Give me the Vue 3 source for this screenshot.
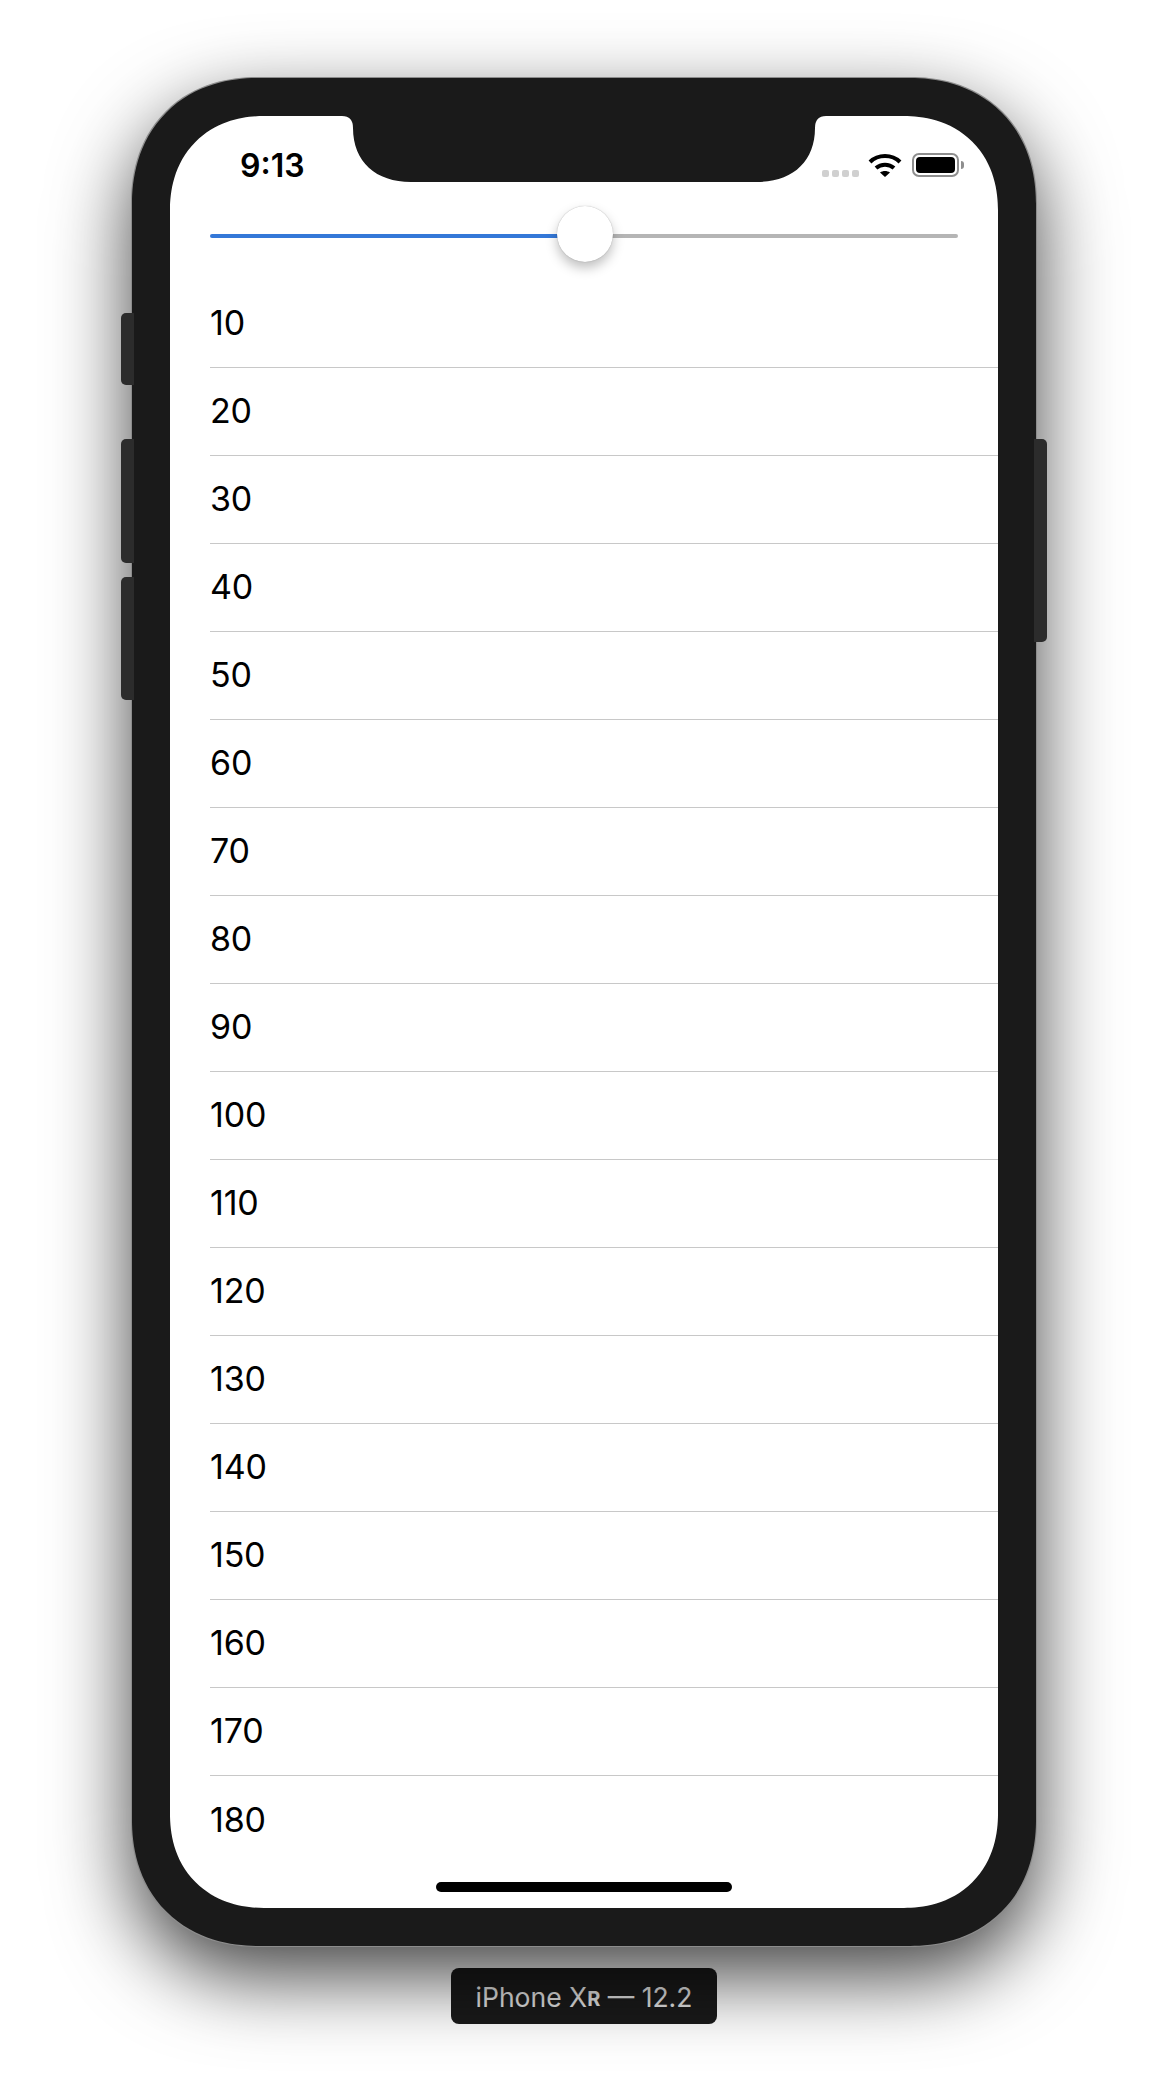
<template>
  <div class="stage">
    <div class="device">
      <span class="side-btn mute"></span>
      <span class="side-btn vol-up"></span>
      <span class="side-btn vol-down"></span>
      <span class="side-btn power"></span>

      <div class="screen">
        <svg class="notch" width="484" height="66" viewBox="0 0 484 66">
          <path d="M0 0 Q11 0 11 12 C11 46 34 66 69 66 H415 C450 66 473 46 473 12 Q473 0 484 0 Z" fill="#1a1a1a" />
        </svg>

        <div class="status-bar">
          <span class="time">9:13</span>
          <div class="status-icons">
            <div class="signal">
              <i v-for="n in 4" :key="n"></i>
            </div>
            <svg class="wifi" width="34" height="24" viewBox="0 0 34 24" fill="none" stroke="#000">
              <path d="M2 9 C10 1 24 1 32 9" stroke-width="4" />
              <path d="M8 15 C13 10.5 21 10.5 26 15" stroke-width="4" />
              <path d="M12 19.5 C15 17.5 19 17.5 22 19.5 L17 24 Z" fill="#000" stroke="none" />
            </svg>
            <div class="battery">
              <div class="battery-body"><div class="battery-level"></div></div>
              <span class="battery-cap"></span>
            </div>
          </div>
        </div>

        <div class="slider">
          <div class="track fill" :style="{ width: fillWidth + 'px' }"></div>
          <div class="thumb"></div>
          <div class="track rest"></div>
        </div>

        <ul class="list">
          <li v-for="item in items" :key="item" class="row">{{ item }}</li>
        </ul>

        <div class="home-indicator"></div>
      </div>
    </div>

    <div class="device-label">iPhone X<span class="small-r">R</span> — 12.2</div>
  </div>
</template>

<script setup>
const items = Array.from({ length: 18 }, (_, i) => (i + 1) * 10);
const fillWidth = 350;
</script>

<style>
html,
body {
  background: #fff;
}
</style>

<style scoped>
* {
  box-sizing: border-box;
}

.stage {
  width: 1168px;
  height: 2096px;
  padding-top: 78px;
  display: flex;
  flex-direction: column;
  align-items: center;
  overflow: hidden;
  background: #fff;
  font-family: Inter, "Liberation Sans", sans-serif;
}

.device {
  position: relative;
  width: 904px;
  height: 1868px;
  padding: 38px;
  flex: none;
  background: #1a1a1a;
  border-radius: 122px;
  box-shadow: 0 0 0 1px #8c8c8c, 0 30px 80px rgba(0, 0, 0, 0.75);
}

.side-btn {
  position: absolute;
  width: 13px;
  background: #2c2c2c;
  border-radius: 5px 0 0 5px;
}

.mute {
  left: -11px;
  top: 235px;
  height: 72px;
}

.vol-up {
  left: -11px;
  top: 361px;
  height: 124px;
}

.vol-down {
  left: -11px;
  top: 499px;
  height: 123px;
}

.power {
  right: -11px;
  top: 361px;
  height: 203px;
  border-radius: 0 5px 5px 0;
}

.screen {
  position: relative;
  width: 828px;
  height: 1792px;
  background: #fff;
  border-radius: 88px;
  overflow: hidden;
}

@supports (corner-shape: superellipse(1.3)) {
  .device {
    border-radius: 126px;
    corner-shape: superellipse(1.12);
  }

  .screen {
    border-radius: 94px;
    corner-shape: superellipse(1.12);
  }
}

.notch {
  position: absolute;
  left: 172px;
  top: 0;
}

.status-bar {
  height: 90px;
  padding: 32px 40px 0 70px;
  display: flex;
  justify-content: space-between;
}

.time {
  font-size: 32px;
  font-weight: 600;
  line-height: 36px;
  color: #000;
}

.status-icons {
  display: flex;
  align-items: flex-start;
  margin-top: 5px;
}

.signal {
  display: flex;
  gap: 3px;
  margin: 17px 9px 0 0;
}

.signal i {
  width: 7px;
  height: 7px;
  border-radius: 2px;
  background: #d0d0d0;
}

.wifi {
  margin-right: 10px;
}

.battery {
  display: flex;
  align-items: center;
  margin-right: -6px;
}

.battery-body {
  width: 47px;
  height: 24px;
  padding: 2px;
  border: 2px solid #8e8e8e;
  border-radius: 7px;
}

.battery-level {
  height: 100%;
  background: #000;
  border-radius: 4px;
}

.battery-cap {
  width: 3px;
  height: 8px;
  margin-left: 2px;
  background: #8e8e8e;
  border-radius: 0 3px 3px 0;
}

.slider {
  height: 56px;
  margin: 0 40px;
  display: flex;
  align-items: center;
}

.track {
  height: 4px;
  margin-top: 4px;
  border-radius: 2px;
}

.fill {
  flex: none;
  background: #3478d8;
}

.rest {
  flex: 1;
  background: #b5b5b5;
}

.thumb {
  flex: none;
  width: 56px;
  height: 56px;
  margin-left: -3px;
  margin-right: -3px;
  position: relative;
  background: #fff;
  border-radius: 50%;
  box-shadow: 0 0 1px rgba(0, 0, 0, 0.35), 0 6px 12px rgba(0, 0, 0, 0.25);
}

.list {
  list-style: none;
  margin: 18px 0 0;
  padding: 0;
}

.row {
  height: 88px;
  margin-left: 40px;
  padding-bottom: 2px;
  border-bottom: 1px solid #c8c8c8;
  display: flex;
  align-items: center;
  font-size: 34px;
  letter-spacing: -0.2px;
  color: #000;
}

.row:last-child {
  border-bottom: 0;
}

.home-indicator {
  position: absolute;
  left: 266px;
  bottom: 16px;
  width: 296px;
  height: 10px;
  background: #000;
  border-radius: 5px;
}

.device-label {
  width: 266px;
  height: 56px;
  margin-top: 22px;
  padding-top: 1px;
  flex: none;
  display: flex;
  align-items: center;
  justify-content: center;
  background: #1a1a1a;
  border-radius: 8px;
  box-shadow: 0 0 0 1px rgba(255, 255, 255, 0.25);
  color: #e6e6e6;
  font-size: 26.5px;
  white-space: pre;
}

.small-r {
  font-size: 20px;
  font-weight: 700;
  margin-top: 4px;
}
</style>
